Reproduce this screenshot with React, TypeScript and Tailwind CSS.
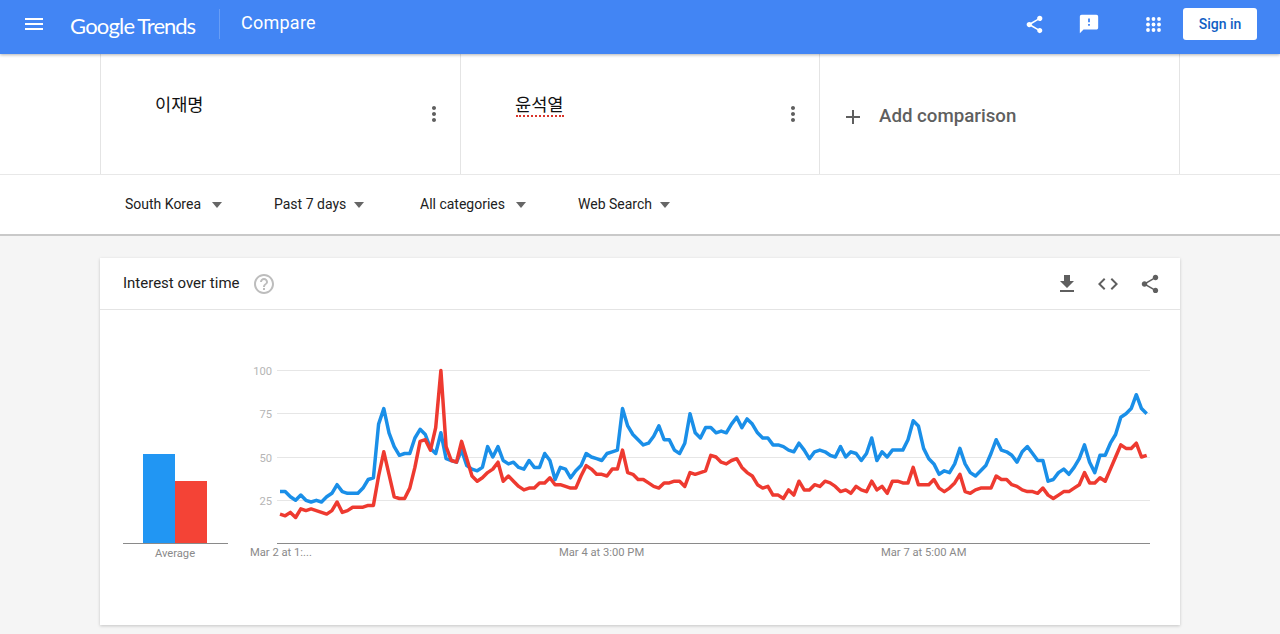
import { MdAdd, MdCode, MdFeedback, MdFileDownload, MdHelpOutline, MdMenu, MdMoreVert, MdShare } from 'react-icons/md'

const blue = [
  30, 30, 27, 25, 28, 25, 24, 25, 24, 27, 29, 34, 30, 29, 29, 29, 32, 37, 38, 69, 78, 64, 56, 51, 52, 52, 61, 66, 63, 55,
  52, 64, 49, 48, 47, 54, 45, 43, 42, 44, 56, 50, 56, 48, 46, 47, 44, 43, 48, 44, 44, 52, 48, 37, 44,
  43, 38, 42, 45, 52, 50, 49, 48, 52, 53, 54, 78, 68, 63, 60, 57, 58, 62, 68, 60, 60, 54, 52, 58, 75, 64, 61, 67, 67, 64,
  65, 64, 69, 73, 67, 72, 69, 64, 61, 61, 57, 57, 56, 54, 53, 58, 54, 49, 53, 54, 53, 51, 50, 56, 50, 53, 52, 48,
  52, 61, 48, 53, 50, 54, 54, 54, 60, 71, 68, 55, 49, 46, 40, 42, 41, 46, 55, 46, 41, 39, 42, 45, 52, 60, 54, 53, 51, 47,
  53, 56, 52, 48, 48, 36, 37, 41, 43, 40, 44, 49, 57, 47, 41, 51, 51, 58, 63, 73, 75, 78, 86, 78, 75,
]

const red = [
  17, 16, 18, 15, 20, 19, 20, 19, 18, 17, 19, 24, 18, 19, 21, 21, 21, 22, 22, 39, 53, 40, 27, 26, 26, 32, 44, 59, 60, 54,
  67, 100, 56, 48, 47, 59, 49, 39, 36, 38, 41, 43, 47, 36, 39, 36, 33, 31, 32, 32, 35, 35, 38, 34, 34,
  33, 32, 32, 39, 45, 43, 40, 40, 39, 43, 43, 54, 41, 40, 37, 37, 35, 33, 32, 35, 35, 36, 36, 33, 41, 40, 41, 42, 51, 50,
  47, 46, 48, 49, 44, 41, 39, 34, 32, 33, 28, 28, 26, 31, 28, 36, 31, 31, 34, 33, 36, 35, 33, 30, 31, 29, 33, 31,
  30, 36, 31, 33, 29, 36, 36, 35, 35, 44, 34, 34, 34, 37, 32, 30, 32, 35, 40, 30, 29, 31, 32, 32, 32, 39, 37, 37, 34, 33,
  31, 30, 30, 29, 32, 28, 26, 28, 30, 30, 32, 34, 41, 35, 35, 38, 36, 43, 50, 57, 55, 55, 58, 50, 51,
]

const filters = [
  { label: 'South Korea', width: 'w-[149px]', gap: 'ml-[11px]' },
  { label: 'Past 7 days', width: 'w-[146px]', gap: 'ml-[8px]' },
  { label: 'All categories', width: 'w-[158px]', gap: 'ml-[11px]' },
  { label: 'Web Search', width: 'w-[110px]', gap: 'ml-[8px]' },
]

const grid = [
  { label: '100', y: 370.5 },
  { label: '75', y: 413.5 },
  { label: '50', y: 457.5 },
  { label: '25', y: 500.5 },
]

function toPoints(values: number[]) {
  return values.map((v, i) => `${(280 + i * 5.19).toFixed(1)},${(543.5 - v * 1.73).toFixed(1)}`).join(' ')
}

function AppsIcon() {
  const spots = [0, 1, 2]
  return (
    <svg width="15" height="15" viewBox="0 0 15 15" fill="#fff">
      {spots.map((r) => spots.map((c) => <circle key={`${r}${c}`} cx={2 + c * 5.5} cy={2 + r * 5.5} r="1.9" />))}
    </svg>
  )
}

function TermCell({ term, squiggle, width }: { term: string; squiggle?: boolean; width: string }) {
  return (
    <div className={`${width} flex border-l border-[#e4e4e4] pr-[14px] pl-[54px]`}>
      <div className="relative mt-[39px] self-start text-[17.6px] leading-[24px] text-[#111]">
        {term}
        {squiggle ? (
          <div className="absolute right-0 bottom-0 left-[1px] border-b-2 border-dotted border-[#d9342b]" />
        ) : null}
      </div>
      <MdMoreVert className="mt-[48px] ml-auto text-[#5f5f5f]" size={24} />
    </div>
  )
}

export default function App() {
  return (
    <div className="h-[634px] overflow-hidden bg-[#f5f5f5] font-['Roboto','Noto_Sans_CJK_KR',sans-serif]">
      <header className="relative z-10 flex h-[54px] items-center bg-[#4285f4] pb-[6px] text-white shadow-[0_1px_3px_rgba(0,0,0,0.3)]">
        <MdMenu className="ml-[22px]" size={24} />
        <div className="ml-[24px] flex w-[149px] items-baseline pt-[3px] font-['Lato',sans-serif] text-[22px] leading-none tracking-[-0.8px]">
          <span>Google</span>
          <span className="ml-[3px] tracking-[-1px]">Trends</span>
        </div>
        <div className="h-[30px] w-px bg-white/20" />
        <div className="mb-[2px] ml-[21px] text-[18px] leading-none tracking-[0.25px]">Compare</div>
        <MdShare className="ml-auto" size={21} />
        <MdFeedback className="ml-[33px]" size={22} />
        <div className="mr-[22px] ml-[46px]">
          <AppsIcon />
        </div>
        <div className="mr-[23px] flex h-[32px] w-[74px] items-center justify-center rounded-[3px] bg-white text-[14px] font-medium text-[#1160c4]">
          Sign in
        </div>
      </header>

      <div className="flex h-[120px] bg-white pl-[100px]">
        <TermCell term="이재명" width="w-[360px]" />
        <TermCell term="윤석열" width="w-[359px]" squiggle />
        <div className="flex w-[361px] items-center border-x border-[#e4e4e4] pt-[5px] pl-[21px]">
          <MdAdd className="text-[#5f5f5f]" size={24} />
          <div className="ml-[14px] text-[18.7px] font-medium text-[#5f5f5f]">Add comparison</div>
        </div>
      </div>

      <div className="flex h-[62px] items-center border-t border-b-2 border-t-[#e8e8e8] border-b-[#c9c9c9] bg-white pl-[125px]">
        {filters.map((f) => (
          <div key={f.label} className={`${f.width} flex items-center text-[14px] text-[#212121]`}>
            <span>{f.label}</span>
            <div className={`${f.gap} h-0 w-0 border-x-[5.5px] border-t-[6px] border-x-transparent border-t-[#666]`} />
          </div>
        ))}
      </div>

      <div className="mx-[100px] mt-[22px] h-[367px] bg-white shadow-[0_1px_3px_rgba(0,0,0,0.2)]">
        <div className="flex h-[52px] items-center border-b border-[#e4e4e4] pr-[19px] pl-[23px]">
          <span className="text-[15px] text-[#212121]">Interest over time</span>
          <MdHelpOutline className="ml-[12px] text-[#bdbdbd]" size={24} />
          <MdFileDownload className="ml-auto text-[#5f5f5f]" size={24} />
          <MdCode className="ml-[17px] text-[#5f5f5f]" size={24} />
          <MdShare className="ml-[19px] text-[#5f5f5f]" size={22} />
        </div>

        <div className="flex pt-[50px] pl-[23px]">
          <div className="w-[105px]">
            <div className="flex h-[184px] items-end justify-center border-b border-[#8a8a8a] pr-[1px]">
              <div className="h-[89px] w-[32px] bg-[#2196f3]" />
              <div className="h-[62px] w-[32px] bg-[#f44336]" />
            </div>
            <div className="mt-[3px] pr-[1px] text-center text-[11.2px] leading-[13px] text-[#8a8a8a]">Average</div>
          </div>

          <svg className="ml-[7px]" width="925" height="210" viewBox="235 360 925 210">
            {grid.map((g) => (
              <g key={g.label}>
                <line x1="277" x2="1150" y1={g.y} y2={g.y} stroke="#e6e6e6" />
                <text x="272" y={g.y + 4} textAnchor="end" fontSize="11.2" fill="#b5b5b5">
                  {g.label}
                </text>
              </g>
            ))}
            <line x1="277" x2="1150" y1="543.5" y2="543.5" stroke="#8a8a8a" />
            <polyline points={toPoints(blue)} fill="none" stroke="#1a8fe8" strokeWidth="3.5" strokeLinejoin="round" />
            <polyline points={toPoints(red)} fill="none" stroke="#ee3a30" strokeWidth="3.5" strokeLinejoin="round" />
            <g fontSize="11.2" fill="#8a8a8a">
              <text x="250" y="556">
                Mar 2 at 1:...
              </text>
              <text x="559" y="556">
                Mar 4 at 3:00 PM
              </text>
              <text x="881" y="556">
                Mar 7 at 5:00 AM
              </text>
            </g>
          </svg>
        </div>
      </div>
    </div>
  )
}
